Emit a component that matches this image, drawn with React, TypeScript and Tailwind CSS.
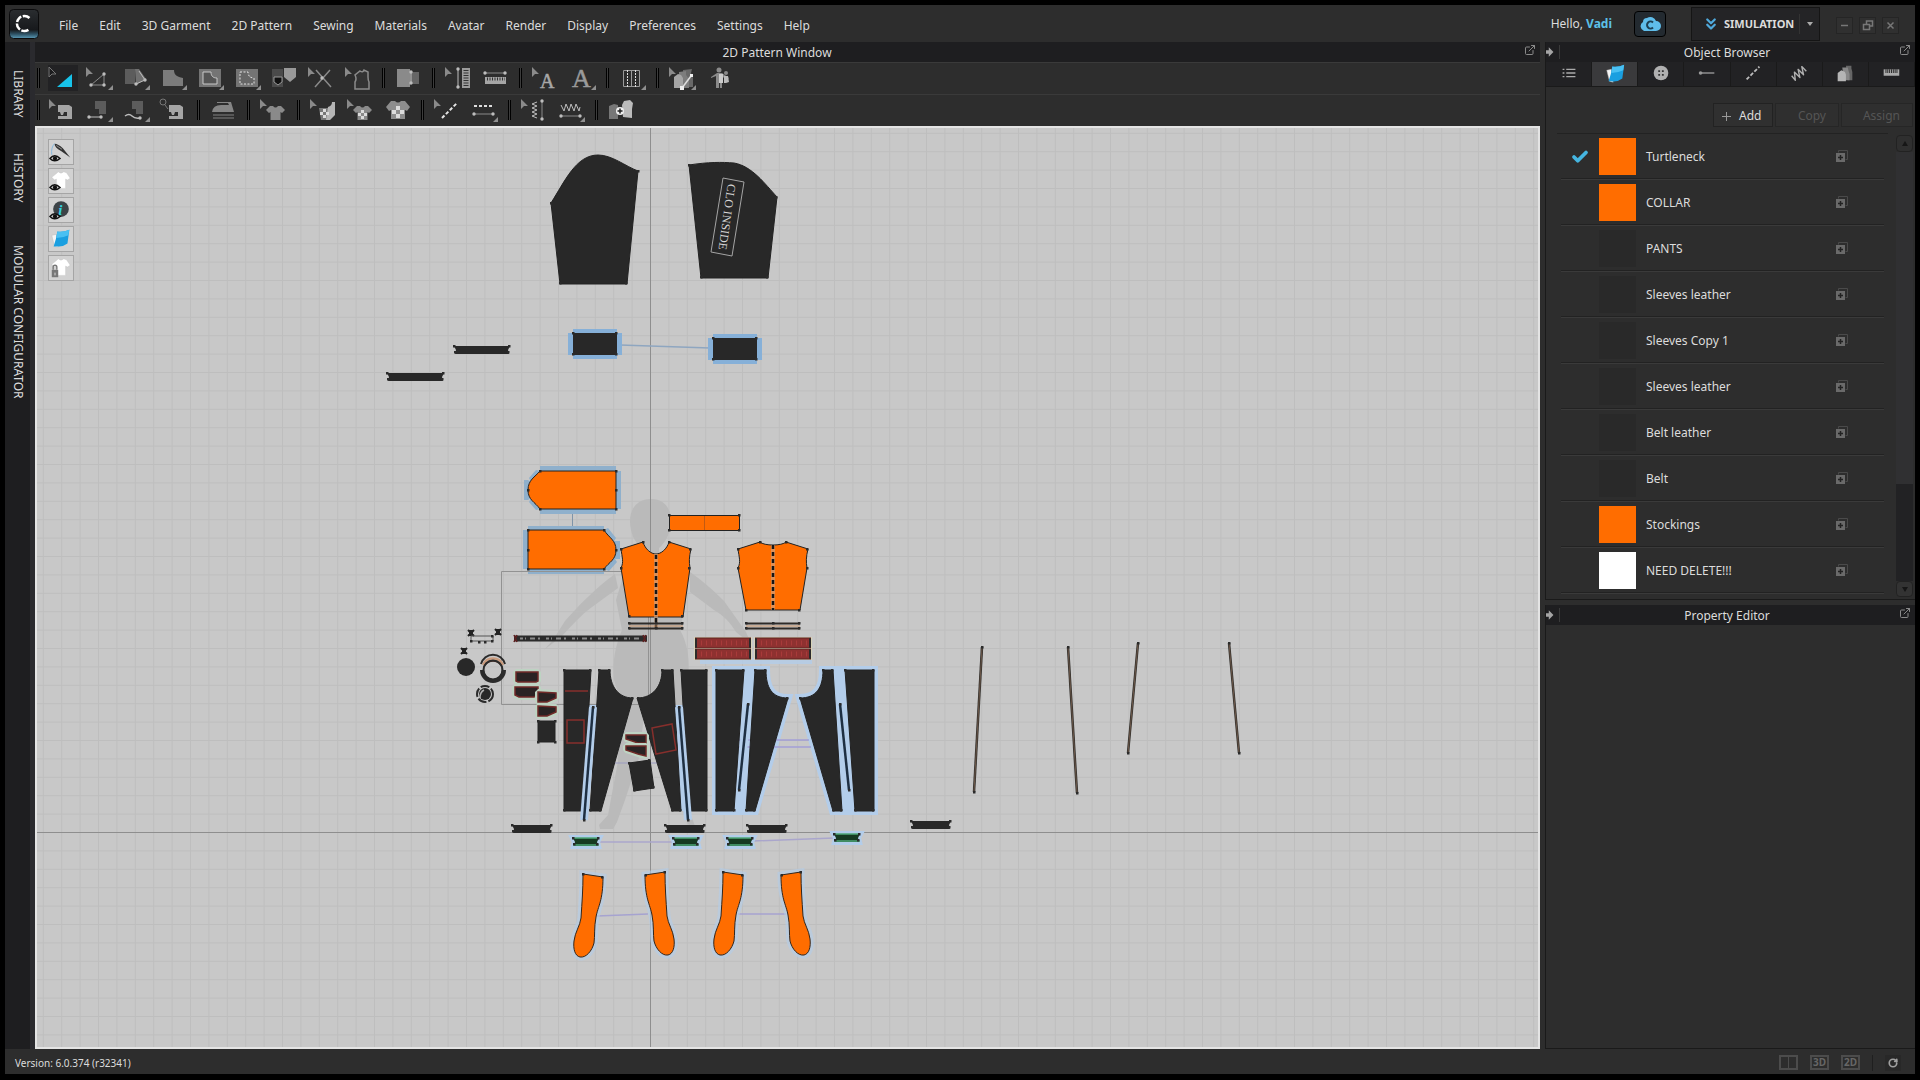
import { ReactNode } from 'react';
import { Check, ChevronsDown, ExternalLink, RotateCw } from 'lucide-react';

type Pt = [number, number];

const MENU = [
  'File',
  'Edit',
  '3D Garment',
  '2D Pattern',
  'Sewing',
  'Materials',
  'Avatar',
  'Render',
  'Display',
  'Preferences',
  'Settings',
  'Help',
];

const FABRICS = [
  { name: 'Turtleneck', swatch: 'bg-[#ff6d00]', active: true },
  { name: 'COLLAR', swatch: 'bg-[#ff6d00]' },
  { name: 'PANTS', swatch: 'bg-[#292929]' },
  { name: 'Sleeves leather', swatch: 'bg-[#292929]' },
  { name: 'Sleeves Copy 1', swatch: 'bg-[#292929]' },
  { name: 'Sleeves leather', swatch: 'bg-[#292929]' },
  { name: 'Belt leather', swatch: 'bg-[#292929]' },
  { name: 'Belt', swatch: 'bg-[#292929]' },
  { name: 'Stockings', swatch: 'bg-[#ff6d00]' },
  { name: 'NEED DELETE!!!', swatch: 'bg-white' },
];

/* ---------- toolbar icons, all on a 37x32 cell ---------- */

const G = '#8a8a8a';
const L = '#bdbdbd';
const D = '#5c5c5c';

const Cursor = ({ off }: { off?: boolean }) => (
  <path
    d="M5 5v10l3-3h4z"
    fill={off ? '#1c1c1e' : G}
    stroke={off ? '#777' : 'none'}
    strokeWidth="1"
  />
);
const More = () => <path d="M32 23v5h-5z" fill="#8f8f8f" />;
const Dot = ({ x, y }: { x: number; y: number }) => (
  <circle cx={x} cy={y} r="1.7" fill={L} />
);
const Machine = () => (
  <path d="M14 11h11l3 2v12h-14v-3h9v-4h-3l-1 3h-2l-1-3h-2z" fill="#a5a5a5" />
);
const Tee = () => (
  <path
    d="M18 12l3 0q2.500 3 5 0l3 0 4 4-3 3-1.500-1v8h-10v-8l-1.500 1-3-3z"
    fill={G}
  />
);
const Checks = ({ x, y, s }: { x: number; y: number; s: number }) => (
  <g fill="#dcdcdc">
    {[0, 1, 2].map((r) =>
      [0, 1, 2].map((c) =>
        (r + c) % 2 ? (
          <rect key={`${r}${c}`} x={x + c * s} y={y + r * s} width={s} height={s} />
        ) : null
      )
    )}
  </g>
);

type Tool = { label: string; icon: ReactNode; on?: boolean };

const ROW_ONE: Tool[][] = [
  [
    {
      label: 'Transform Pattern',
      on: true,
      icon: (
        <>
          <Cursor off />
          <path d="M13 25h15v-13z" fill="#17c3ea" />
        </>
      ),
    },
    {
      label: 'Edit Pattern',
      icon: (
        <>
          <Cursor />
          <path d="M10 23L23 12v11z" fill="none" stroke={G} />
          <Dot x={10} y={23} />
          <Dot x={23} y={23} />
          <Dot x={23} y={12} />
          <More />
        </>
      ),
    },
    {
      label: 'Polygon',
      icon: (
        <>
          <path d="M7 7h10v15h-10z" fill={D} />
          <path d="M17 7l4 0 7 10-10 6z" fill="#707070" />
          <path d="M18 22l9-4-6-9" fill="none" stroke={L} />
          <Dot x={18} y={22} />
          <Dot x={27} y={18} />
          <More />
        </>
      ),
    },
    {
      label: 'Internal Polygon',
      icon: (
        <>
          <path d="M8 8h11c0 5 3 7 9 8v8h-20z" fill="#7b7b7b" />
          <More />
        </>
      ),
    },
    {
      label: 'Trace',
      icon: (
        <>
          <path d="M7 7h22v18h-22z" fill="#747474" />
          <path d="M11 10h8c0 4 2 6 6 6v6h-14z" fill="#555" stroke="#c8c8c8" />
          <More />
        </>
      ),
    },
    {
      label: 'Internal Shape',
      icon: (
        <>
          <path d="M7 7h22v18h-22z" fill="#747474" />
          <path
            d="M11 10h8c0 4 2 6 6 6v6h-14z"
            fill="#666"
            stroke="#e0e0e0"
            strokeDasharray="2 1.500"
          />
          <More />
        </>
      ),
    },
    {
      label: 'Pocket',
      icon: (
        <>
          <path d="M6 7h11v18h-11z" fill="#4a4a4a" />
          <path d="M8 15h8v5l-4 3-4-3z" fill="#111" stroke="#999" />
          <path d="M18 6h12v9l-6 5-6-5z" fill="#999" />
        </>
      ),
    },
    {
      label: 'Slash',
      icon: (
        <>
          <Cursor />
          <path d="M12 25L27 8M13 8l15 17" stroke={G} strokeWidth="1.500" />
          <Dot x={19} y={16} />
        </>
      ),
    },
    {
      label: 'Seam Allowance',
      icon: (
        <>
          <Cursor />
          <path
            d="M15 27v-7q2-3 0-7l5-4q3 2 4-1l4 2v5q0 3 1 5v7z"
            fill="#333"
            stroke={G}
            strokeWidth="1.500"
          />
        </>
      ),
    },
  ],
  [
    {
      label: 'Fold',
      icon: (
        <>
          <path d="M7 7h13v18h-13z" fill={G} />
          <path d="M20 10h9v12h-9z" fill="#666" />
          <path d="M21 10v12" stroke={L} />
          <Dot x={21} y={10} />
          <Dot x={21} y={21} />
        </>
      ),
    },
  ],
  [
    {
      label: 'Measure Height',
      icon: (
        <>
          <Cursor />
          <path d="M18 7v18" stroke={L} />
          <Dot x={18} y={7} />
          <Dot x={18} y={25} />
          <path d="M22 6h8v20h-8z" fill="#9c9c9c" />
          <path d="M26 8v16" stroke="#333" strokeWidth="5" strokeDasharray="1 1.500" />
        </>
      ),
    },
    {
      label: 'Measure Width',
      icon: (
        <>
          <path d="M8 11h20" stroke={G} />
          <Dot x={8} y={11} />
          <Dot x={28} y={11} />
          <path d="M8 15h21v7h-21z" fill="#a5a5a5" />
          <path d="M10 17h18" stroke="#333" strokeWidth="3" strokeDasharray="1 1.500" />
        </>
      ),
    },
  ],
  [
    {
      label: 'Edit Annotation',
      icon: (
        <>
          <Cursor />
          <text x="13" y="26" fontSize="20" fill="#a8a8a8" stroke="#a8a8a8" strokeWidth="0.500" className="font-['Liberation_Serif',serif]">
            A
          </text>
        </>
      ),
    },
    {
      label: 'Annotation',
      icon: (
        <>
          <text x="8" y="25" fontSize="26" fill="#9a9a9a" stroke="#9a9a9a" strokeWidth="0.500" className="font-['Liberation_Serif',serif]">
            A
          </text>
          <More />
        </>
      ),
    },
  ],
  [
    {
      label: 'Pleats',
      icon: (
        <>
          <path d="M9.500 8.500h16v16h-16zM17.500 8v17" fill="none" stroke="#9a9a9a" />
          <path d="M13.500 8v17M21.500 8v17" stroke="#ddd" strokeDasharray="2 1" />
          <More />
        </>
      ),
    },
  ],
  [
    {
      label: 'Edit Grading',
      icon: (
        <>
          <Cursor />
          <path d="M19 8l9-1-1 4 2 5v9h-10z" fill="#686868" />
          <path d="M15 10l7-1 0 4 3 4v9h-10z" fill="#7d7d7d" />
          <path d="M10 15l4-3 3 1 2 3v10h-9z" fill="#a5a5a5" />
          <path d="M18 26L27 14" stroke="#ddd" strokeWidth="1.500" />
          <path d="M16 24h4v4h-4zM26 12h3v3h-3z" fill="#eee" />
          <More />
        </>
      ),
    },
    {
      label: 'Avatar Fitting',
      icon: (
        <>
          <circle cx="18" cy="8" r="2.500" fill={G} />
          <circle cx="25" cy="11" r="2" fill={G} />
          <path d="M10 15l6-4h5l7 5-1 1-6-2v11h-2v-6h-1v6h-3v-12l-5 2z" fill={G} />
          <path d="M18 12h4v9h-4z" fill="#ccc" />
          <path d="M23 14h4l1 6-3 1h-2z" fill="#bbb" />
        </>
      ),
    },
  ],
];

const ROW_TWO: Tool[][] = [
  [
    {
      label: 'Edit Sewing',
      icon: (
        <>
          <Cursor />
          <Machine />
        </>
      ),
    },
    {
      label: 'Segment Sewing',
      icon: (
        <>
          <path d="M14 7h11v13h-7v-5h-4z" fill={D} />
          <path d="M8 23h12" stroke={L} />
          <Dot x={8} y={23} />
          <Dot x={20} y={23} />
          <More />
        </>
      ),
    },
    {
      label: 'Free Sewing',
      icon: (
        <>
          <path d="M14 7h11v13h-7v-5h-4z" fill={D} />
          <path d="M7 22q4-3 7 0t8 2" fill="none" stroke={L} strokeWidth="1.500" />
          <Dot x={22} y={24} />
          <More />
        </>
      ),
    },
    {
      label: 'Check Sewing',
      icon: (
        <>
          <circle cx="8" cy="8" r="3" fill="none" stroke="#777" />
          <path d="M10 11l3 4" stroke="#777" />
          <Machine />
        </>
      ),
    },
  ],
  [
    {
      label: 'Steam',
      icon: (
        <>
          <path d="M12 8h14l3 10h-22q1-7 9-7h8l-1-2h-11z" fill="#858585" />
          <path d="M8 21h21M8 24h21" stroke="#666" strokeWidth="1.500" />
        </>
      ),
    },
  ],
  [
    {
      label: 'Edit Texture',
      icon: (
        <>
          <Cursor />
          <g transform="translate(-3 0)">
            <Tee />
          </g>
        </>
      ),
    },
  ],
  [
    {
      label: 'Texture Surface',
      icon: (
        <>
          <Cursor />
          <path d="M14 14h10v12h-8z" fill="#777" />
          <path d="M23 13q4-1 4-5h3v13l-5 5h-4z" fill="#b5b5b5" />
          <Checks x={15} y={15} s={3} />
        </>
      ),
    },
    {
      label: 'Edit Graphic',
      icon: (
        <>
          <Cursor />
          <g transform="translate(-3 0)">
            <Tee />
            <Checks x={19} y={16} s={3} />
          </g>
        </>
      ),
    },
    {
      label: 'Graphic',
      icon: (
        <>
          <path
            d="M12 7l4 0q3 3 6 0l4 0 5 6-3 4-2-1v9h-14v-9l-2 1-3-4z"
            fill="#8d8d8d"
          />
          <Checks x={13} y={12} s={4} />
        </>
      ),
    },
  ],
  [
    {
      label: 'Edit Topstitch',
      icon: (
        <>
          <Cursor />
          <path d="M13 24L28 9" stroke="#e5e5e5" strokeWidth="2" strokeDasharray="3.500 2" />
        </>
      ),
    },
    {
      label: 'Segment Topstitch',
      icon: (
        <>
          <path d="M8 12h20" stroke="#ddd" strokeWidth="2" strokeDasharray="3 2" />
          <path d="M8 20h19" stroke={G} />
          <Dot x={8} y={20} />
          <Dot x={27} y={20} />
          <More />
        </>
      ),
    },
  ],
  [
    {
      label: 'Edit Puckering',
      icon: (
        <>
          <Cursor />
          <path d="M21 8l-5 2 5 2-5 2 5 2-5 2 5 2-5 2 5 2" fill="none" stroke={L} />
          <path d="M26 7v18" stroke={G} />
          <Dot x={26} y={7} />
          <Dot x={26} y={25} />
        </>
      ),
    },
    {
      label: 'Segment Puckering',
      icon: (
        <>
          <path
            d="M8 11l3 6 2-7 3 7 2-7 3 7 2-7 3 7 1-4"
            fill="none"
            stroke={L}
            strokeLinejoin="round"
          />
          <path d="M8 22h20" stroke={G} />
          <Dot x={8} y={22} />
          <Dot x={27} y={22} />
          <More />
        </>
      ),
    },
  ],
  [
    {
      label: 'Add Trim',
      icon: (
        <>
          <path d="M6 12l5-2 4 1v14h-9z" fill="#777" />
          <path d="M19 11l2-4 6-1 3 3-1 6v9l-9-1z" fill="#bbb" />
          <circle cx="17" cy="17" r="4" fill="#eee" />
          <path d="M14.500 17h5M17 14.500v5" stroke="#222" strokeWidth="1.500" />
        </>
      ),
    },
  ],
];

function Separator() {
  return (
    <span className="flex w-[13px] justify-center">
      <span className="h-5 w-[3px] border-x border-black bg-[#3c3c3c]" />
    </span>
  );
}

function Toolbar({ groups }: { groups: Tool[][] }) {
  return (
    <div className="flex h-8 items-center border-t border-[#3a3a3a] bg-[#2d2d2d] pb-[2px]">
      <span className="ml-[2px] mr-[4px] h-5 w-[3px] border-x border-black bg-[#3c3c3c]" />
      {groups.map((group, i) => (
        <div key={i} className="flex items-center">
          {i > 0 && <Separator />}
          {group.map((tool) => (
            <button
              key={tool.label}
              type="button"
              aria-label={tool.label}
              className={
                tool.on
                  ? 'bg-[linear-gradient(#222224,#222224)] bg-[length:30px_26px] bg-center bg-no-repeat'
                  : ''
              }
            >
              <svg width="37" height="32" viewBox="0 0 37 32">
                {tool.icon}
              </svg>
            </button>
          ))}
        </div>
      ))}
    </div>
  );
}

/* ---------- pattern pieces ---------- */

const DARK = '#282828';
const ORANGE = '#ff6d00';
const HALO = '#b3cdea';

function Nodes({ pts }: { pts: Pt[] }) {
  return (
    <g fill="#2b2b2b">
      {pts.map(([x, y]) => (
        <rect key={`${x}-${y}`} x={x - 1} y={y - 1} width="2.500" height="2.500" />
      ))}
    </g>
  );
}

function Piece({
  d,
  nodes = [],
  fill = DARK,
  stroke = '#222',
}: {
  d: string;
  nodes?: Pt[];
  fill?: string;
  stroke?: string;
}) {
  return (
    <g>
      <path d={d} fill={fill} stroke={stroke} />
      <Nodes pts={nodes} />
    </g>
  );
}

// narrow strip with notched ends
function Strap({ x, y, w, green }: { x: number; y: number; w: number; green?: boolean }) {
  const d = `M${x} ${y}h${w}l-2 4 1 4h${-w + 2}l1-4z`;
  return (
    <g>
      {green && <path d={d} fill="none" stroke={HALO} strokeWidth="6" />}
      <path d={d} fill={green ? '#163a22' : DARK} />
      {green && (
        <path d={`M${x} ${y}h${w}M${x} ${y + 7}h${w}`} stroke="#4fa878" strokeWidth="1.500" />
      )}
      <Nodes
        pts={[
          [x, y],
          [x + w - 1, y],
          [x + 1, y + 6],
          [x + w - 2, y + 6],
        ]}
      />
    </g>
  );
}

function Cuff({ x, y }: { x: number; y: number }) {
  return (
    <g>
      <path d={`M${x} ${y - 4}h44v4h5v22h-5v4h-44v-4h-5v-22h5z`} fill="#86b0d8" />
      <rect x={x} y={y} width="44" height="22" fill={DARK} />
      <Nodes
        pts={[
          [x, y],
          [x + 43, y],
          [x, y + 21],
          [x + 43, y + 21],
        ]}
      />
    </g>
  );
}

function Bar({ a, b, halo }: { a: Pt; b: Pt; halo?: boolean }) {
  const line = { x1: a[0], y1: a[1], x2: b[0], y2: b[1] };
  return (
    <g>
      {halo && <line {...line} stroke={HALO} strokeWidth="8" />}
      <line {...line} stroke={halo ? '#1e2f42' : '#33302c'} strokeWidth="2.500" />
      {!halo && <line {...line} stroke="#6a5648" strokeWidth="1" />}
      <Nodes pts={[a, b]} />
    </g>
  );
}

const SOCK =
  'M583 874L603 877C603 901 598 906 596 917C594 927 595 936 594 943C592 951 586 958 580 957C575 956 573 949 574 941C575 932 580 926 581 918C582 902 583 890 583 874Z';

function Sock({ move }: { move: string }) {
  return (
    <g transform={move}>
      <path d={SOCK} fill="none" stroke={HALO} strokeOpacity="0.6" strokeWidth="7" />
      <path d={SOCK} fill={ORANGE} stroke="#33261c" />
      <Nodes
        pts={[
          [583, 874],
          [602, 877],
        ]}
      />
    </g>
  );
}

function Ruffle({ x, y }: { x: number; y: number }) {
  return (
    <g>
      <rect x={x - 1} y={y - 1} width="58" height="12" fill="#d8d3b8" />
      <rect x={x} y={y} width="56" height="10" fill="#8e3130" />
      <path d={`M${x + 6} ${y + 5}h46`} stroke="#a83a3a" strokeWidth="5" strokeDasharray="1 4" />
      <path d={`M${x + 1} ${y}v10M${x + 55} ${y}v10`} stroke="#2b2b2b" strokeWidth="2" />
      <path d={`M${x} ${y}h56M${x} ${y + 10}h56`} stroke="#5a2422" />
    </g>
  );
}

function Cross({ x, y }: { x: number; y: number }) {
  return (
    <path
      d={`M${x - 3} ${y - 3}l6 6m0-6l-6 6M${x - 2} ${y - 2}h4M${x - 2} ${y}h4M${x - 2} ${y + 2}h4`}
      stroke="#222"
      strokeWidth="2"
      fill="none"
    />
  );
}

// pocket flap with a red seam line
function Flap({ d }: { d: string }) {
  return (
    <g>
      <path d={d} fill="none" stroke="#bdd3c2" strokeWidth="6" strokeLinejoin="bevel" />
      <path d={d} fill="#2a2323" stroke="#702a28" strokeWidth="1.500" />
    </g>
  );
}

function Canvas() {
  return (
    <svg className="block h-full w-full" aria-label="Pattern canvas">
      <defs>
        <pattern
          id="grid"
          x="650"
          y="832"
          width="18.4"
          height="18.4"
          patternUnits="userSpaceOnUse"
        >
          <path d="M0.500 0v18.4M0 0.500h18.4" stroke="#bebebe" strokeWidth="1" />
        </pattern>
      </defs>
      <g transform="translate(-37 -128)">
        <rect x="0" y="0" width="4000" height="3000" fill="#c8c8c8" />
        <rect x="0" y="0" width="4000" height="3000" fill="url(#grid)" />

        {/* avatar silhouette */}
        <g fill="#bababa">
          <path d="M651 499c14 0 20 10 20 22 0 12-6 22-12 27v14h-17v-14c-7-5-12-15-12-27 0-12 7-22 21-22z" />
          <path d="M628 560h46l12 40-6 30c8 14 10 30 8 50l-8 26h-58l-8-26c-2-20 2-36 8-50l-6-30z" />
          <path d="M615 574C596 588 580 604 565 621L553 640L544 650L562 636C572 625 581 615 592 607L618 588Z" />
          <path d="M690 572C704 582 714 591 724 601L746 632L751 644L736 632C730 622 724 616 714 610L690 592Z" />
          <path d="M613 690h34l-8 68-14 42-8 22-4 7h-13l-1-4 9-10 10-54z" />
          <path d="M655 690h32l-6 60 4 50 10 26h-6l-12-26-12-50z" />
        </g>

        <path d="M650.500 0v3000M0 832.500h4000" stroke="#8e8e8e" />

        {/* sleeves */}
        <Piece
          d="M551 203C565 181 576 155 598 155C612 155 625 166 638 171L627 284H560Z"
          nodes={[[551, 203], [638, 171], [626, 283], [560, 283]]}
        />
        <Piece
          d="M689 165C708 162 722 162 734 163C752 166 765 184 777 197L768 278H701Z"
          nodes={[[689, 165], [776, 197], [767, 277], [701, 277]]}
        />
        <path d="M723 178L744 182L732 256L711 252Z" fill="none" stroke="#a5a5a5" />
        <text
          transform="translate(727 217) rotate(98)"
          textAnchor="middle"
          y="4"
          fontSize="12"
          fill="#d5d5d5"
          className="font-['Liberation_Serif',serif]"
        >
          CLO INSIDE
        </text>
        <path d="M620 345L710 348" stroke="#8ea6c0" strokeWidth="1.500" />
        <Cuff x={573} y={333} />
        <Cuff x={713} y={338} />
        <Strap x={454} y={346} w={56} />
        <Strap x={387} y={373} w={57} />

        {/* collar and body */}
        <path d="M572.500 509v21" stroke="#7f94a8" />
        <path
          d="M540 466H616V471H621V509H616V514H540V509L536 510L529 502L531 498L528 500H524V480H528L531 482L529 478L536 470L540 471Z"
          fill="#8fb0cc"
        />
        <Piece
          d="M616 471V509H540C535 502 528 500 528 490C528 480 535 477 540 471Z"
          nodes={[[616, 471], [616, 509], [540, 509], [540, 471], [528, 490], [616, 490]]}
          fill={ORANGE}
        />
        <path
          d="M528 526H604V530L608 528L616 538L614 541L620 541V559H615L617 562L609 571L604 569V574H528V569H523V530H528Z"
          fill="#8fb0cc"
        />
        <Piece
          d="M528 530H604C609 538 616 540 616 550C616 560 609 562 604 569H528Z"
          nodes={[[528, 530], [604, 530], [616, 550], [604, 569], [528, 569], [528, 550]]}
          fill={ORANGE}
        />
        <path d="M501.500 571.500h147v133h-147z" fill="none" stroke="#929292" />
        <Piece
          d="M669.500 515.500H739.500V530.500H669.500Z"
          nodes={[[669, 515], [739, 515], [739, 530], [669, 530]]}
          fill={ORANGE}
        />
        <path d="M704.500 516v14" stroke="#c25a12" />
        <Piece
          d="M643 542C645 549 651 554 656 554C661 554 667 549 669 542L691 549C689 557 689 562 690 568L683 617H629L621 568C624 562 622 557 621 549Z"
          nodes={[[643, 542], [669, 542], [690, 549], [689, 568], [682, 616], [629, 616], [621, 568], [621, 549]]}
          fill={ORANGE}
        />
        <Piece
          d="M760 542C764 546 782 546 786 542L808 549C806 557 806 562 807 568L800 610H746L738 568C741 562 739 557 738 549Z"
          nodes={[[760, 542], [786, 542], [807, 549], [807, 568], [799, 610], [746, 610], [738, 568], [738, 549]]}
          fill={ORANGE}
        />
        <path d="M656 554v75M773 545v65" stroke="#c9a68c" strokeWidth="4" strokeOpacity="0.6" />
        <path d="M656 555v74M773 545v65" stroke="#151515" strokeWidth="2.500" strokeDasharray="4 3" />
        {[629, 746].map((x) => (
          <g key={x}>
            <path d={`M${x} 623.500h54M${x} 628.500h54`} stroke="#2e2b28" strokeWidth="2" />
            <path d={`M${x} 626h54`} stroke="#c79166" strokeWidth="1" />
            <Nodes pts={[[x, 623], [x + 27, 623], [x + 53, 623], [x, 628], [x + 27, 628], [x + 53, 628]]} />
          </g>
        ))}

        {/* belt */}
        <path d="M514 638.500h133" stroke="#2b2b2b" strokeWidth="6" />
        <path d="M520 638.500h122" stroke="#8a8a8a" strokeWidth="2" strokeDasharray="3 2 1 4 5 3 2 6" />
        <path d="M514 635l3 7m0-7l-3 7M643 635l3 7m0-7l-3 7" stroke="#5e2020" strokeWidth="1.500" />

        <rect x="700" y="658" width="112" height="6" fill={HALO} fillOpacity="0.8" />
        <Ruffle x={695} y={638} />
        <Ruffle x={755} y={638} />
        <Ruffle x={695} y={649} />
        <Ruffle x={755} y={649} />

        {/* hardware */}
        <Cross x={471} y={633} />
        <Cross x={498} y={632} />
        <Cross x={464} y={651} />
        <path d="M471 636h22v5h-22z" fill="none" stroke="#555" />
        <Nodes pts={[[471, 641], [479, 642], [485, 642], [492, 641], [492, 636]]} />
        <circle cx="466" cy="667" r="9" fill={DARK} />
        <path d="M481 664a12.500 13 0 0 1 24 0" fill="none" stroke="#2b2b2b" strokeWidth="2" />
        <path d="M483 665a11 11 0 0 1 20 0" fill="none" stroke="#c99a7c" strokeWidth="2.500" />
        <path d="M485 665a10 10 0 0 1 16 0" fill="none" stroke="#5b3327" strokeWidth="1.500" />
        <circle cx="493" cy="670" r="9.500" fill="none" stroke="#2b2b2b" strokeWidth="2" />
        <path d="M482 670a11 11 0 0 0 22 0" fill="none" stroke="#2b2b2b" strokeWidth="4" />
        <circle cx="485" cy="694" r="6" fill={DARK} />
        <circle cx="485" cy="694" r="8" fill="none" stroke="#2b2b2b" strokeWidth="2" strokeDasharray="9 2" />
        <path d="M480 698q0-6 4-8" fill="none" stroke="#b0b0b0" strokeWidth="1.500" />
        <Flap d="M516 672h22v9l-2 1h-18l-2-1z" />
        <Flap d="M515 687h23v7l-4 3h-15l-4-2z" />
        <Flap d="M538 692l18 1v5l-9 4h-9z" />
        <Flap d="M538 706l18 1v5l-9 4h-9z" />
        <Piece d="M538 721H555V742H538Z" nodes={[[538, 721], [555, 721], [555, 742], [538, 742]]} />

        {/* trousers, front */}
        <path d="M613 763h50" stroke="#9a9ac0" />
        <path d="M586 705h11l-9 106h-12z" fill={HALO} />
        <path d="M675 705h8l7 106h-10z" fill={HALO} />
        <Piece d="M564 670H591L583 811H564Z" nodes={[[564, 670], [590, 670], [582, 810], [564, 810]]} />
        <Piece
          d="M599 670H610C610 686 618 698 633 698L601 811H590Z"
          nodes={[[599, 670], [609, 670], [632, 698], [600, 810], [590, 810]]}
        />
        <Piece
          d="M673 670H662C662 686 653 698 637 698L672 811H681Z"
          nodes={[[672, 670], [662, 670], [638, 698], [672, 810], [680, 810]]}
        />
        <Piece d="M681 670H707V811H689Z" nodes={[[681, 670], [706, 670], [706, 810], [689, 810]]} />
        <Bar a={[593, 707]} b={[584, 820]} halo />
        <Bar a={[679, 707]} b={[688, 820]} halo />
        <path
          d="M565 691h23M567 720h17v23h-17zM652 728l20-4 4 26-20 4z"
          fill="none"
          stroke="#862f2c"
          strokeWidth="1.500"
        />
        <Flap d="M626 735h20v8h-8l-12-4z" />
        <Flap d="M626 746h20v10l-8-2-12-4z" />
        <Piece d="M629 763L650 760L654 788L634 791Z" nodes={[[629, 763], [649, 760], [653, 787], [634, 790]]} />

        {/* trousers, back */}
        <g fill={HALO} stroke={HALO} strokeWidth="8">
          <path d="M716 670H766C766 688 772 698 788 698L755 811H716Z" />
          <path d="M874 670H823C823 688 816 698 800 698L833 811H874Z" />
        </g>
        <path d="M739 740h70M739 747h72" stroke="#a39fd6" strokeWidth="1.500" />
        <Bar a={[748, 704]} b={[739, 790]} halo />
        <Bar a={[840, 704]} b={[849, 790]} halo />
        <Piece d="M716 670H744L734 811H716Z" nodes={[[716, 670], [743, 670], [734, 810], [716, 810]]} />
        <Piece
          d="M755 670H766C766 688 772 698 788 698L755 811H746Z"
          nodes={[[755, 670], [765, 670], [787, 698], [754, 810], [746, 810]]}
        />
        <Piece
          d="M833 670H823C823 688 816 698 800 698L833 811H842Z"
          nodes={[[832, 670], [823, 670], [800, 698], [833, 810], [841, 810]]}
        />
        <Piece d="M845 670H874V811H855Z" nodes={[[845, 670], [873, 670], [873, 810], [855, 810]]} />

        {/* hems and cuffs */}
        <Strap x={512} y={825} w={40} />
        <Strap x={665} y={825} w={40} />
        <Strap x={747} y={825} w={40} />
        <Strap x={911} y={821} w={40} />
        <path d="M599 842H673M753 841L834 838" stroke="#aaa6cc" strokeWidth="1.500" />
        <Strap x={573} y={838} w={26} green />
        <Strap x={673} y={838} w={26} green />
        <Strap x={727} y={838} w={26} green />
        <Strap x={834} y={834} w={26} green />

        {/* stockings */}
        <path d="M597 916L648 914M738 914H786" stroke="#a6a3d0" strokeWidth="1.500" />
        <Sock move="translate(0 0)" />
        <Sock move="translate(1248 -2) scale(-1 1)" />
        <Sock move="translate(140 -2)" />
        <Sock move="translate(1384 -2) scale(-1 1)" />

        {/* drawstrings */}
        <Bar a={[982, 647]} b={[974, 792]} />
        <Bar a={[1068, 647]} b={[1077, 793]} />
        <Bar a={[1138, 643]} b={[1128, 753]} />
        <Bar a={[1229, 643]} b={[1239, 753]} />
      </g>
    </svg>
  );
}

/* ---------- view toggles over the canvas ---------- */

const Eye = () => (
  <g>
    <path d="M1 20q5-6 11 0-6 5-11 0z" fill="#ddd" stroke="#111" strokeWidth="1.500" />
    <circle cx="6.500" cy="20" r="2.300" fill="#111" />
  </g>
);
const Shirt = () => (
  <path
    d="M9 4l1-1q3 3 6 0l3 1 4 6-3 2-2-1v10h-10v-10l-2 1-3-3z"
    fill="#fff"
    stroke="#c4c4c4"
    strokeWidth="0.500"
  />
);
const FabricSwatch = () => (
  <g>
    <path d="M3 9l5-1 2 14-4-1z" fill="#f5f5f5" stroke="#bbb" strokeWidth="0.500" />
    <path d="M9 5q7 1 13-2l-2 15q-5 4-12 3l-3 0q3-8 4-16z" fill="#1a9fe0" />
    <path d="M9 5q7 1 13-2l-1 6q-6 3-13 3z" fill="#49c0f2" />
  </g>
);

const VIEWS = [
  {
    label: 'Show Sewing',
    icon: (
      <>
        <path d="M6 4q4 0 9 5l8 10-10-7q-7-4-7-8z" fill="#333" />
        <path d="M8 6l6 4" stroke="#999" />
        <path d="M6 4q-4 4-3 12" fill="none" stroke="#7fb5de" />
        <Eye />
      </>
    ),
  },
  {
    label: 'Show Pattern',
    icon: (
      <>
        <Shirt />
        <Eye />
      </>
    ),
  },
  {
    label: 'Show Information',
    icon: (
      <>
        <circle cx="13" cy="12" r="8.500" fill="#3c4347" />
        <text x="10" y="18" fontSize="16" fontWeight="700" fontStyle="italic" fill="#34d3e0" className="font-['Liberation_Serif',serif]">
          i
        </text>
        <Eye />
      </>
    ),
  },
  { label: 'Fabric View', icon: <FabricSwatch /> },
  {
    label: 'Lock Pattern',
    icon: (
      <>
        <Shirt />
        <path d="M3 15h7v8h-7z" fill="#777" />
        <path d="M4.500 15v-3a2 2 0 0 1 4 0v3" fill="none" stroke="#777" strokeWidth="1.500" />
        <path d="M6.500 18v3" stroke="#ddd" />
      </>
    ),
  },
];

/* ---------- right column ---------- */

function PanelTitle({ title }: { title: string }) {
  return (
    <div className="flex h-5 items-center bg-[#1e1e20]">
      <svg width="14" height="14" viewBox="0 0 14 14" className="border-r border-[#3a3a3a]">
        <path d="M0 5h3v-3l5 5-5 5v-3h-3z" fill="#a5a5a5" />
      </svg>
      <h2 className="flex-1 pt-[2px] pr-[5px] text-center">{title}</h2>
      <button type="button" aria-label={`Undock ${title}`} className="mr-1 pb-1">
        <ExternalLink className="h-3 w-3 text-[#8a8a8a]" />
      </button>
    </div>
  );
}

const TABS = [
  {
    label: 'Scene',
    icon: (
      <path d="M5 8h2M5 12h2M5 16h2M9 8h10M9 12h10M9 16h10" stroke="#aaa" strokeWidth="1.500" />
    ),
  },
  { label: 'Fabric', icon: <FabricSwatch /> },
  {
    label: 'Button',
    icon: (
      <>
        <circle cx="12" cy="12" r="8" fill="#b0b0b0" />
        <path d="M9 9h2v2h-2zM13 9h2v2h-2zM9 13h2v2h-2zM13 13h2v2h-2z" fill="#333" />
      </>
    ),
  },
  {
    label: 'Buttonhole',
    icon: (
      <>
        <path d="M4 12h16" stroke="#999" strokeWidth="1.500" />
        <circle cx="5" cy="12" r="2" fill="#999" />
      </>
    ),
  },
  {
    label: 'Topstitch',
    icon: <path d="M5 19L19 5" stroke="#bbb" strokeWidth="2" strokeDasharray="4 2" />,
  },
  {
    label: 'Puckering',
    icon: (
      <path
        d="M4 15l4 5-1-9 6 6-2-9 6 6-2-9 5 5"
        fill="none"
        stroke="#b0b0b0"
        strokeWidth="1.500"
        strokeLinejoin="round"
      />
    ),
  },
  {
    label: 'Grading',
    icon: (
      <>
        <path d="M13 4l6 0 0 3 1 4v9h-5z" fill="#666" />
        <path d="M9 6l6 0 1 4 1 3v7h-6z" fill="#888" />
        <path d="M4 12l4-3 4 2 1 3v7h-9z" fill="#b5b5b5" />
      </>
    ),
  },
  {
    label: 'Measure',
    icon: (
      <>
        <path d="M4 8h17v7h-17z" fill="#aaa" />
        <path d="M6 10h14" stroke="#222" strokeWidth="4" strokeDasharray="1 1" />
      </>
    ),
  },
];

function ObjectBrowser() {
  return (
    <section className="border-b border-l border-[#1a1a1a]">
      <PanelTitle title="Object Browser" />
      <div className="flex h-[25px] border-b border-[#1a1a1a] bg-[#222224]">
        {TABS.map((tab, i) => (
          <button
            key={tab.label}
            type="button"
            aria-label={tab.label}
            className={
              i === 1
                ? 'flex flex-1 items-center justify-center border-r border-[#1a1a1a] bg-[#3a3a3c] pb-[2px]'
                : 'flex flex-1 items-center justify-center border-r border-[#1a1a1a] pb-[2px]'
            }
          >
            <svg width="22" height="22" viewBox="0 0 24 24">
              {tab.icon}
            </svg>
          </button>
        ))}
      </div>
      <div className="mt-[16px] mr-[2px] flex justify-end gap-[2px]">
        <button type="button" className="flex h-6 w-[60px] items-center gap-2 border border-[#222] bg-[#303030] pt-[2px] pl-2">
          <svg width="9" height="9" viewBox="0 0 9 9">
            <path d="M4.500 0v9M0 4.500h9" stroke="#999" />
          </svg>
          Add
        </button>
        <button type="button" disabled className="h-6 w-[64px] border border-[#262626] bg-[#2f2f2f] pt-[2px] pr-3 text-right text-[#555]">
          Copy
        </button>
        <button type="button" disabled className="h-6 w-[72px] border border-[#262626] bg-[#2f2f2f] pt-[2px] pr-3 text-right text-[#555]">
          Assign
        </button>
      </div>
      <div className="mt-[6px] mb-[5px] ml-[11px] flex">
        <ul className="mr-2 flex-1 border-t border-[#222]">
          {FABRICS.map((fabric, i) => (
            <li
              key={i}
              className="mx-1 flex h-[46px] items-center border-b border-[#3a3a3a] shadow-[0_-1px_0_#222_inset]"
            >
              <span className="flex w-[38px] pl-[10px]">
                {fabric.active && <Check className="h-[18px] w-[18px] text-[#45b5e0]" strokeWidth={5} />}
              </span>
              <span className={`h-[37px] w-[37px] shrink-0 ${fabric.swatch}`} />
              <span className="ml-[10px] flex-1">{fabric.name}</span>
              <button type="button" aria-label={`Duplicate ${fabric.name}`} className="mr-[36px]">
                <svg width="13" height="13" viewBox="0 0 13 13">
                  <path d="M3.500 2.500v-2h9v9h-2" fill="none" stroke="#4a4a4a" />
                  <rect x="1" y="3" width="9" height="9" fill="#6a6a6a" />
                  <path d="M5.500 5v5M3 7.500h5" stroke="#222" strokeWidth="1.500" />
                </svg>
              </button>
            </li>
          ))}
        </ul>
        <div className="mt-[2px] mr-[2px] flex w-[17px] flex-col">
          <button type="button" aria-label="Scroll up" className="flex h-[17px] items-center justify-center rounded-sm border border-[#222] bg-[#2f2f2f]">
            <svg width="6" height="5" viewBox="0 0 6 5">
              <path d="M0 5h6l-3-5z" fill="#161616" />
            </svg>
          </button>
          <div className="flex flex-1 flex-col justify-end bg-[#303032]">
            <div className="h-[97px] bg-[#222224]" />
          </div>
          <button type="button" aria-label="Scroll down" className="-mb-[3px] flex h-4 items-center justify-center rounded-sm border border-[#222] bg-[#333]">
            <svg width="6" height="5" viewBox="0 0 6 5">
              <path d="M0 0h6l-3 5z" fill="#161616" />
            </svg>
          </button>
        </div>
      </div>
    </section>
  );
}

/* ---------- page ---------- */

function Header() {
  return (
    <header className="flex h-[37px] shrink-0 items-center bg-[#2d2d2d]">
      <svg width="30" height="30" viewBox="0 0 30 30" className="ml-1">
        <defs>
          <linearGradient id="logo" x1="0" y1="0" x2="0" y2="1">
            <stop offset="0" stopColor="#2a2d30" />
            <stop offset="0.7" stopColor="#17191c" />
            <stop offset="0.85" stopColor="#2e5366" />
            <stop offset="1" stopColor="#5b9cb8" />
          </linearGradient>
        </defs>
        <rect x="0.500" y="0.500" width="29" height="29" rx="4" fill="url(#logo)" stroke="#0b0b0c" />
        <path
          d="M20.500 9a7.500 7.500 0 1 0 0 11"
          fill="none"
          stroke="#fff"
          strokeWidth="2.500"
          strokeDasharray="7 1.500"
        />
      </svg>
      <nav className="ml-5 flex flex-1 gap-[21px] pt-1">
        {MENU.map((item) => (
          <button key={item} type="button">
            {item}
          </button>
        ))}
      </nav>
      <div className="flex items-center">
        <p className="mr-[22px]">
          Hello, <b className="text-[#5cc0e8]">Vadi</b>
        </p>
        <button
          type="button"
          aria-label="Cloud"
          className="mr-[25px] flex h-[26px] w-8 items-center justify-center rounded-sm border border-black bg-[#232a30]"
        >
          <svg width="22" height="18" viewBox="0 0 22 18">
            <path d="M5 16a5 5 0 0 1-1-9 4 4 0 0 1 4-4 6 6 0 0 1 9 3 5 5 0 0 1 0 10z" fill="#5fbdea" />
            <path d="M14 7.500a3.500 3.500 0 1 0 0 5" fill="none" stroke="#1d3f52" strokeWidth="2" />
          </svg>
        </button>
        <div className="flex h-[34px] w-[129px] items-center border border-[#151515] bg-[#242426]">
          <button type="button" className="flex flex-1 items-center gap-1 pl-[10px] text-[11px] font-bold">
            <ChevronsDown className="h-[18px] w-[18px] text-[#4fa9dc]" strokeWidth={3} />
            SIMULATION
          </button>
          <button type="button" aria-label="Simulation mode" className="flex h-5 w-5 items-center justify-center border-l border-[#333]">
            <svg width="6" height="4" viewBox="0 0 6 4">
              <path d="M0 0h6l-3 4z" fill="#aaa" />
            </svg>
          </button>
        </div>
        <div className="mt-1 mr-4 ml-4 flex gap-[6px]">
          {['M4 7.500h7', 'M3.500 6.500h6v5h-6zM6.500 6v-3h6v5h-3', 'M4.500 4.500l6 6m0-6l-6 6'].map((d, i) => (
            <button
              key={d}
              type="button"
              aria-label={['Minimize', 'Restore', 'Close'][i]}
              className="border border-[#252525] bg-[#303030]"
            >
              <svg width="15" height="15" viewBox="0 0 15 15">
                <path d={d} fill="none" stroke="#777" strokeWidth="1.500" />
              </svg>
            </button>
          ))}
        </div>
      </div>
    </header>
  );
}

export default function App() {
  return (
    <div className="flex h-screen flex-col bg-black p-[5px] pb-[6px] font-['Noto_Sans',sans-serif] text-[12px] leading-4 text-[#dcdcdc]">
      <Header />

      <div className="flex min-h-0 flex-1 bg-[#2d2d2d]">
        <aside className="flex w-[30px] flex-col items-center gap-[35px] border-r-[5px] border-[#2a2a2e] bg-[#1e1e20] pt-7">
          {['LIBRARY', 'HISTORY', 'MODULAR CONFIGURATOR'].map((name) => (
            <button key={name} type="button" className="[writing-mode:vertical-rl] last:mt-2">
              {name}
            </button>
          ))}
        </aside>

        <main className="flex min-w-0 flex-1 flex-col">
          <div className="flex h-5 shrink-0 items-center bg-[#1e1e20]">
            <h1 className="flex-1 pt-[2px] pr-[5px] text-center">2D Pattern Window</h1>
            <button type="button" aria-label="Undock 2D Pattern Window" className="mr-1 pb-1">
              <ExternalLink className="h-3 w-3 text-[#8a8a8a]" />
            </button>
          </div>
          <Toolbar groups={ROW_ONE} />
          <Toolbar groups={ROW_TWO} />
          <div className="relative min-h-0 flex-1 overflow-hidden border-2 border-[#e4e4e4] bg-[#c8c8c8]">
            <Canvas />
            <div className="absolute top-[11px] left-[11px] flex flex-col gap-[3px]">
              {VIEWS.map((view) => (
                <button
                  key={view.label}
                  type="button"
                  aria-label={view.label}
                  className="h-[26px] w-[26px] border border-[#a5a5a5] bg-[#d2d2d2]"
                >
                  <svg width="24" height="24" viewBox="0 0 26 26">
                    {view.icon}
                  </svg>
                </button>
              ))}
            </div>
          </div>
        </main>

        <div className="ml-[5px] flex w-[370px] shrink-0 flex-col">
          <ObjectBrowser />
          <section className="mt-[5px] flex flex-1 flex-col border-b border-l border-[#1a1a1a]">
            <PanelTitle title="Property Editor" />
          </section>
        </div>
      </div>

      <footer className="flex h-[25px] shrink-0 items-center bg-[#2d2d2d] pr-[14px] pl-[10px] text-[10px]">
        <p className="flex-1 pt-[2px]">Version: 6.0.374 (r32341)</p>
        <div className="flex items-center gap-3 pt-[2px] font-bold text-[#666]">
          <button type="button" aria-label="Split view" className="flex h-[15px] w-[19px] border-2 border-[#4c4c4c]">
            <span className="h-full w-1/2 border-r border-[#4c4c4c]" />
          </button>
          <button type="button" className="h-[15px] w-[19px] border-2 border-[#4c4c4c] leading-[11px]">
            3D
          </button>
          <button type="button" className="h-[15px] w-[19px] border-2 border-[#4c4c4c] leading-[11px]">
            2D
          </button>
          <span className="h-4 border-l border-[#1f1f1f]" />
          <button type="button" aria-label="Reset layout" className="flex h-4 w-4 items-center justify-center bg-[#282828]">
            <RotateCw className="h-[10px] w-[10px] text-[#a0a0a0]" strokeWidth={4} />
          </button>
        </div>
      </footer>
    </div>
  );
}
